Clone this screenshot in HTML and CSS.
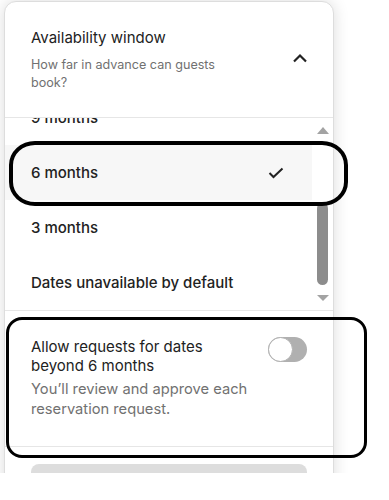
FILE: index.html
```html
<!DOCTYPE html>
<html>
<head>
  <link rel="stylesheet" href="styles.css">
</head>
<body>
  <div class="frame">
    <div class="card">
      <div class="panel-head">
        <div>
          <div class="title">Availability window</div>
          <div class="hint hint-narrow">How far in advance can guests book?</div>
        </div>
        <svg class="chevron" width="16" height="10" viewBox="0 0 16 10">
          <polyline points="2,8.5 8,2.5 14,8.5" fill="none" stroke="#222" stroke-width="2.2"/>
        </svg>
      </div>

      <div class="picker">
        <div class="options">
          <div class="option">9 months</div>
          <div class="option selected">
            <span>6 months</span>
            <svg width="16" height="12" viewBox="0 0 16 12">
              <polyline points="1.5,6 5.5,10 14.5,1.5" fill="none" stroke="#222" stroke-width="2"/>
            </svg>
          </div>
          <div class="option">3 months</div>
          <div class="option">Dates unavailable by default</div>
        </div>
        <div class="scrollbar">
          <span class="arrow arrow-up"></span>
          <span class="thumb"></span>
          <span class="arrow arrow-down"></span>
        </div>
      </div>

      <div class="request">
        <div class="request-text">
          <div class="title title-tight">Allow requests for dates beyond 6 months</div>
          <div class="hint">You’ll review and approve each reservation request.</div>
        </div>
        <label class="switch">
          <input type="checkbox">
          <span class="knob"></span>
        </label>
      </div>

      <div class="card-foot">
        <button class="save"></button>
      </div>
    </div>

    <div class="mark mark-option"></div>
    <div class="mark mark-request"></div>
  </div>
</body>
</html>
```

FILE: styles.css
```css
:root {
  --text: #222222;
  --muted: #717171;
  --line: #e6e6e6;
}

body {
  margin: 0;
  background: #ffffff;
  font-family: "Inter", "Noto Sans", sans-serif;
  color: var(--text);
}

.frame {
  position: relative;
  width: 389px;
  height: 473px;
  overflow: hidden;
}

.card {
  width: 328px;
  margin: 1px 0 0 4px;
  border: 1px solid #dddddd;
  border-radius: 12px 12px 0 0;
  background: #ffffff;
  box-shadow: 0 0 16px rgba(0, 0, 0, 0.14);
}

.panel-head {
  display: flex;
  align-items: center;
  justify-content: space-between;
  padding: 26px 25px 25px 26px;
  border-bottom: 1px solid var(--line);
}

.title {
  font-size: 15px;
  line-height: 20px;
}

.title-tight {
  line-height: 19px;
}

.hint {
  margin-top: 8px;
  font-size: 12.6px;
  line-height: 18px;
  color: var(--muted);
}

.hint-narrow {
  max-width: 200px;
}

.chevron {
  margin-top: -5px;
}

.picker {
  display: flex;
  height: 192px;
  overflow: hidden;
  border-bottom: 1px solid var(--line);
}

.options {
  flex: 1;
  margin-top: -28px;
}

.option {
  display: flex;
  align-items: center;
  justify-content: space-between;
  height: 55px;
  padding: 0 28px 0 26px;
  font-size: 15px;
  font-weight: 500;
}

.option.selected {
  background: #f7f7f7;
}

.scrollbar {
  display: flex;
  flex-direction: column;
  align-items: center;
  width: 21px;
}

.arrow {
  width: 0;
  height: 0;
  border-left: 6px solid transparent;
  border-right: 6px solid transparent;
}

.arrow-up {
  margin-top: 9px;
  border-bottom: 7px solid #a3a3a3;
}

.arrow-down {
  margin-top: 10px;
  border-top: 6px solid #a3a3a3;
}

.thumb {
  width: 11px;
  height: 82px;
  margin-top: 69px;
  border-radius: 6px;
  background: #8c8c8c;
}

.request {
  display: flex;
  justify-content: space-between;
  padding: 26px 26px 27px 26px;
  border-bottom: 1px solid var(--line);
}

.request-text {
  max-width: 222px;
}

.request .hint {
  margin-top: 4px;
  font-size: 14.7px;
  line-height: 20px;
}

.switch {
  position: relative;
  display: block;
  width: 39px;
  height: 25px;
  border-radius: 13px;
  background: #b0b0b0;
}

.switch input {
  opacity: 0;
  width: 0;
  height: 0;
  margin: 0;
}

.knob {
  position: absolute;
  top: 0;
  left: 0;
  width: 23px;
  height: 23px;
  border: 1px solid #b0b0b0;
  border-radius: 50%;
  background: #ffffff;
}

.card-foot {
  padding: 17px 26px 0 26px;
}

.save {
  display: block;
  width: 100%;
  height: 40px;
  border: none;
  border-radius: 8px;
  background: #dddddd;
}

/* hand-drawn annotation marks over the screenshot */
.mark {
  position: absolute;
  border: 4px solid #000000;
}

.mark-option {
  left: 9px;
  top: 141px;
  width: 331px;
  height: 57px;
  border-radius: 26px / 24px;
}

.mark-request {
  left: 6px;
  top: 317px;
  width: 355px;
  height: 135px;
  border-width: 3.5px;
  border-radius: 16px;
}
```
